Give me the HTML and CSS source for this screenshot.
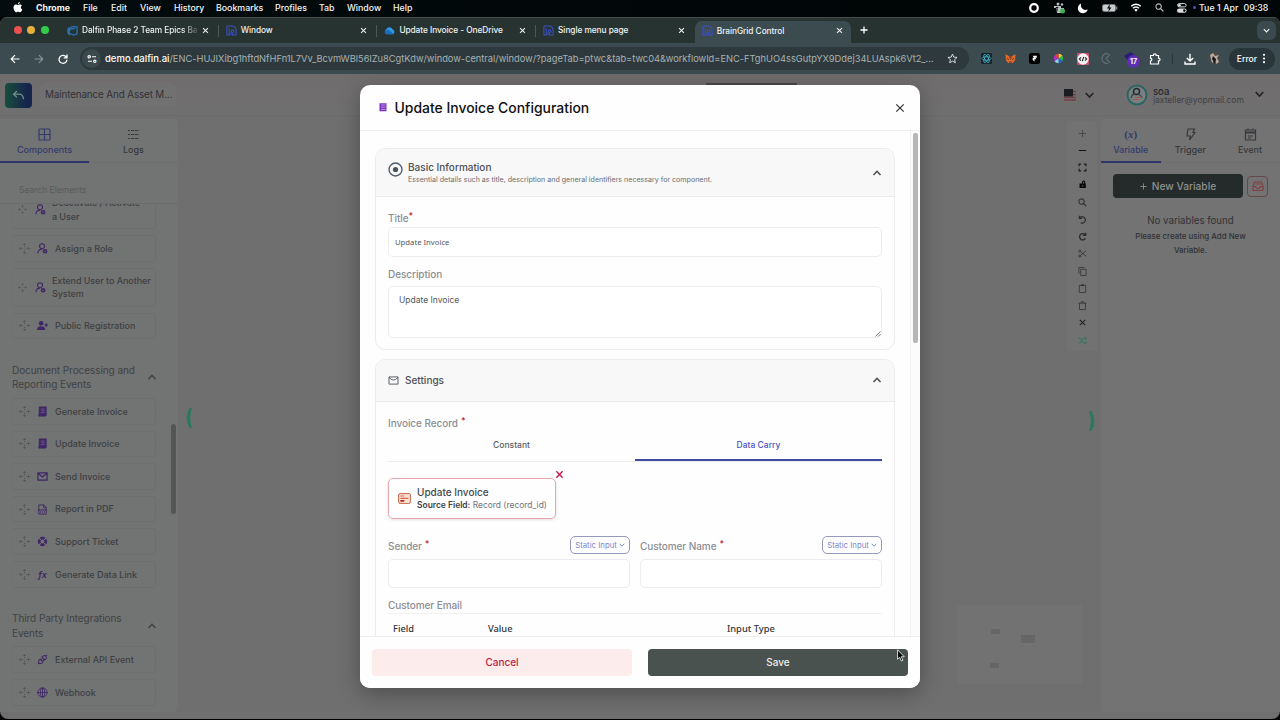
FILE: index.html
```html
<!DOCTYPE html>
<html lang="en">
<head>
<meta charset="utf-8">
<title>BrainGrid Control</title>
<link rel="stylesheet" href="styles.css">
</head>
<body>
<svg width="0" height="0" class="defs">
  <symbol id="move" viewBox="0 0 12 12"><g fill="currentColor"><path d="M6 0l1.600 2.300H4.400zM6 12l1.600-2.300H4.400zM0 6l2.300-1.600v3.200zM12 6L9.700 4.400v3.200z"/><circle cx="6" cy="3.700" r=".6"/><circle cx="6" cy="8.300" r=".6"/><circle cx="3.700" cy="6" r=".6"/><circle cx="8.300" cy="6" r=".6"/></g></symbol>
  <symbol id="user" viewBox="0 0 12 12"><g fill="none" stroke="currentColor" stroke-width="1.200"><circle cx="5.500" cy="3.500" r="2.700"/><path d="M1 11.300c0-3 2-4.600 4.500-4.600"/></g><circle cx="8.800" cy="9" r="2.500" fill="currentColor"/><path d="M7.700 9h2.200" stroke="#747474" stroke-width=".8"/></symbol>
  <symbol id="useradd" viewBox="0 0 12 12"><circle cx="4.500" cy="3.500" r="2.500" fill="currentColor"/><path d="M0 11c0-3 1.500-4.300 4.500-4.300S9 8 9 11z" fill="currentColor"/><path d="M10 3.500v4M8 5.500h4" stroke="currentColor" stroke-width="1.200"/></symbol>
  <symbol id="doc" viewBox="0 0 12 12"><path d="M2 .5h8.500V10L9.500 11.500H1.500V9H2z" fill="currentColor"/><path d="M4 3.300h4.500M4 5.300h4.500M4 7.300h4.500" stroke="#75678c" stroke-width=".8"/></symbol>
  <symbol id="mail" viewBox="0 0 12 12"><path d="M1 2h10v8H1zM1 2.500l5 4 5-4" fill="none" stroke="currentColor" stroke-width="1.300"/></symbol>
  <symbol id="pdf" viewBox="0 0 12 12"><path d="M2 5V1h5.500L10 3.500V11H2V5M7.200 1v3H10M1 6.500h10M4 8v1.500M6 8v1.500M8 8v1.500" fill="none" stroke="currentColor"/></symbol>
  <symbol id="ring" viewBox="0 0 12 12"><circle cx="6" cy="6" r="3.600" fill="none" stroke="currentColor" stroke-width="3"/><path d="M2 2l2.300 2.300M10 2L7.700 4.300M2 10l2.300-2.300M10 10L7.700 7.700" stroke="#747474" stroke-width="1.200"/></symbol>
  <symbol id="plug" viewBox="0 0 12 12"><g fill="none" stroke="currentColor" stroke-width="1.100"><path d="M5.500 3.500l1.500-1.500q1.500-1 2.600.300 1.300 1.200.300 2.700L8.500 6.500zM3.500 5.500L2 7q-1 1.500.300 2.600 1.200 1.300 2.700.300L6.500 8.500zM9.700 2.300L11 1M2.300 9.700L1 11M4.500 6.500l1-1M6.500 7.500l1-1"/></g></symbol>
  <symbol id="globe" viewBox="0 0 12 12"><g fill="none" stroke="currentColor" stroke-width=".9"><circle cx="6" cy="6" r="5"/><ellipse cx="6" cy="6" rx="2.300" ry="5"/><path d="M0 6h12M6 1v10"/></g></symbol>
  <symbol id="up" viewBox="0 0 10 10"><path d="M1.500 7L5 3.300 8.500 7" fill="none" stroke="currentColor" stroke-width="1.500"/></symbol>
  <symbol id="down" viewBox="0 0 10 10"><path d="M1.200 3L5 7l3.800-4" fill="none" stroke="currentColor" stroke-width="1.600"/></symbol>
  <symbol id="x" viewBox="0 0 10 10"><path d="M1.500 1.500l7 7M8.500 1.500l-7 7" fill="none" stroke="currentColor" stroke-width="1.500"/></symbol>
  <symbol id="dalfin" viewBox="0 0 12 12"><g fill="none" stroke="currentColor" stroke-width="1.100"><path d="M1 1h5q5 0 5 5v5M1 1v10h3M3.500 3.500v7.500M5 11l1.200-5.500h2L9 8.500M7 8v3h4"/></g></symbol>
  <symbol id="search" viewBox="0 0 10 10"><circle cx="4" cy="4" r="3" fill="none" stroke="currentColor" stroke-width="1.200"/><path d="M6.200 6.200L9.300 9.300" stroke="currentColor" stroke-width="1.400"/></symbol>
</svg>

<div class="menubar">
  <svg class="apple" viewBox="0 0 12 14"><path d="M8.300 0c.1 1.500-1 2.800-2.400 2.800C5.800 1.500 7 .2 8.300 0zM6 3.800c.6 0 1.300-.7 2.500-.6 1.100 0 2 .6 2.500 1.400-2.100 1.300-1.700 4.100.5 5C11 11 9.900 13 8.600 13c-1 0-1.300-.6-2.400-.6S4.700 13 3.800 13C1.700 13-.8 7.500.8 5c1.300-2.300 3.500-1.900 5.200-1.200z" fill="#fff"/></svg>
  <b>Chrome</b><span>File</span><span>Edit</span><span>View</span><span>History</span><span>Bookmarks</span><span>Profiles</span><span>Tab</span><span>Window</span><span>Help</span>
  <svg class="i10" viewBox="0 0 10 10"><rect x="1.200" y="1.200" width="7.600" height="7.600" rx="3.500" fill="#000" stroke="#fff" stroke-width="2.200"/></svg>
  <svg class="i12" viewBox="0 0 12 12"><path d="M1 4h7v2h3v3l-2 2H4L3 6H1z" fill="#b8bfc2"/><circle cx="5" cy="2" r="1.500" fill="#b8bfc2"/><circle cx="9" cy="2.500" r="1.200" fill="#b8bfc2"/><circle cx="9.500" cy="9" r="2.500" fill="#44ad50"/><path d="M4 5.500v4M2.800 5.500h2.500" stroke="#111"/></svg>
  <svg class="i10" viewBox="0 0 10 10"><path d="M3.200.5A5 5 0 1 0 9.700 6.500 4.800 4.800 0 0 1 3.200.5z" fill="#fff"/></svg>
  <svg class="batt" viewBox="0 0 16 8"><rect x=".5" y=".5" width="13" height="7" rx="1.800" fill="#c9cfd1" stroke="#747a7c"/><path d="M14.800 2.500v3" stroke="#aaa"/><path d="M7.800 0L5 4.500h2L6.200 8 9.500 3.500H7.500z" fill="#06090a"/></svg>
  <svg class="wifi" viewBox="0 0 12 10"><g fill="none" stroke="#fff" stroke-width="1.500"><path d="M.7 3.700q5.300-4.800 10.600 0M2.600 5.900q3.400-3 6.800 0"/></g><path d="M4 7.500q2-1.500 4 0L6 9.700z" fill="#fff"/></svg>
  <svg class="i9 dimwhite"><use href="#search"/></svg>
  <svg class="i10" viewBox="0 0 10 10"><rect x=".6" y=".6" width="8.500" height="3.300" rx="1.600" fill="none" stroke="#ddd"/><rect x="0" y="5.400" width="9.600" height="4.400" rx="2.200" fill="#ddd"/><circle cx="7.300" cy="7.600" r="1.300" fill="#111"/><circle cx="2.500" cy="2.200" r="1.300" fill="#ddd"/></svg>
  <i class="dot"></i>
  <span class="clock">Tue 1 Apr&nbsp; 09:38</span>
</div>

<div class="window">
  <div class="tabs">
    <div class="lights"><i class="r"></i><i class="y"></i><i class="g"></i></div>
    <div class="tab"><svg class="fav" viewBox="0 0 12 12"><path d="M1 4l6-2.500L11 2v7.500L7.500 11 3 9.500M1 4v5l1.500 1V5L9 3.500" fill="none" stroke="#2a6fae" stroke-width="1.500"/></svg><span class="fade">Dalfin Phase 2 Team Epics Ba</span><svg class="cl"><use href="#x"/></svg></div>
    <div class="tab"><svg class="fav blue"><use href="#dalfin"/></svg><span>Window</span><svg class="cl"><use href="#x"/></svg></div>
    <div class="tab"><svg class="fav" viewBox="0 0 12 12"><path d="M3 10a3 3 0 0 1-.5-5.500A3.800 3.800 0 0 1 9.500 5 2.600 2.600 0 0 1 9.500 10z" fill="#2d9be8"/><path d="M1 6.500Q4 3 10 9.500L3 10Q0 9 1 6.500z" fill="#176cc0"/></svg><span>Update Invoice - OneDrive</span><svg class="cl"><use href="#x"/></svg></div>
    <div class="tab noline"><svg class="fav blue"><use href="#dalfin"/></svg><span>Single menu page</span><svg class="cl"><use href="#x"/></svg></div>
    <div class="tab active"><svg class="fav blue"><use href="#dalfin"/></svg><span>BrainGrid Control</span><svg class="cl"><use href="#x"/></svg></div>
    <svg class="plus" viewBox="0 0 10 10"><path d="M5 1.500v7M1.500 5h7" stroke="#fff" stroke-width="1.300"/></svg>
    <div class="tabmenu"><svg class="i7"><use href="#down"/></svg></div>
  </div>
  <div class="toolbar">
    <svg class="i10" viewBox="0 0 10 10"><path d="M9.500 5H1.500M5 1.200L1.200 5 5 8.800" fill="none" stroke="#fff" stroke-width="1.200"/></svg>
    <svg class="i10" viewBox="0 0 10 10"><path d="M.5 5h8M5 1.200L8.800 5 5 8.800" fill="none" stroke="#87949a" stroke-width="1.200"/></svg>
    <svg class="i10" viewBox="0 0 10 10"><path d="M8.300 3A4 4 0 1 0 9 5.700M9 .5v3.300H5.700" fill="none" stroke="#fff" stroke-width="1.300"/></svg>
    <div class="url">
      <div class="site"><svg class="i10" viewBox="0 0 10 10"><g fill="none" stroke="#fff" stroke-width="1.100"><circle cx="2.200" cy="2.800" r="1.200"/><path d="M5 2.800h4M1 7.300h4"/><circle cx="7.800" cy="7.300" r="1.200"/></g></svg></div>
      <span class="addr"><b>demo.dalfin.ai</b>/ENC-HUJIXibg1hftdNfHFn1L7Vv_BcvmWBl56lZu8CgtKdw/window-central/window/?pageTab=ptwc&amp;tab=twc04&amp;workflowId=ENC-FTghUO4ssGutpYX9Ddej34LUAspk6Vt2_...</span>
      <svg class="i11" viewBox="0 0 12 12"><path d="M6 1.200l1.400 3.300 3.600.3-2.700 2.400.8 3.500L6 8.800l-3.100 1.900.8-3.500L1 4.800l3.600-.3z" fill="none" stroke="#dfe5e7"/></svg>
    </div>
    <div class="exts">
      <svg class="i11" viewBox="0 0 12 12"><rect width="12" height="12" rx="1.500" fill="#18252b"/><g fill="none" stroke="#43b6cf" stroke-width=".8"><ellipse cx="6" cy="6" rx="5" ry="2"/><ellipse cx="6" cy="6" rx="5" ry="2" transform="rotate(60 6 6)"/><ellipse cx="6" cy="6" rx="5" ry="2" transform="rotate(120 6 6)"/></g></svg>
      <svg class="i11" viewBox="0 0 12 12"><path d="M.5 1L4 3.200h4L11.500 1 11 8l-2.500 3H3.500L1 8z" fill="#dd6a2b"/><path d="M4 3.200L6 8l2-4.800zM4.500 9h3v2h-3z" fill="#8c4a2c"/><path d="M2.500 6l1.500 1M9.500 6L8 7" stroke="#321"/></svg>
      <svg class="i11" viewBox="0 0 12 12"><rect width="12" height="12" rx="2.500" fill="#000"/><path d="M4 3h4.500v2.300H6.700l1.300 1.400H6V9.500L4 7.300V5.200h1.500z" fill="#fff"/></svg>
      <svg class="i11" viewBox="0 0 12 12"><path d="M6 6V.8A5.200 5.200 0 0 1 10.500 3.400z" fill="#e8d02d"/><path d="M6 6L10.500 3.400a5.200 5.200 0 0 1 0 5.200z" fill="#34b34a"/><path d="M6 6l4.500 2.600A5.200 5.200 0 0 1 6 11.200z" fill="#2764d8"/><path d="M6 6v5.200a5.200 5.200 0 0 1-4.500-2.600z" fill="#8ed2e6"/><path d="M6 6L1.500 8.600a5.200 5.200 0 0 1 0-5.200z" fill="#b52bd0"/><path d="M6 6L1.500 3.400A5.200 5.200 0 0 1 6 .8z" fill="#e43c42"/></svg>
      <svg class="i12" viewBox="0 0 12 12"><rect width="12" height="12" rx="1" fill="#c9516d"/><circle cx="6" cy="6" r="5.700" fill="#f6f1f2"/><path d="M4 4.300L2.300 6 4 7.700M8 4.300L9.700 6 8 7.700M6.700 4L5.300 8" fill="none" stroke="#26262c" stroke-width="1.100"/></svg>
      <svg class="i11" viewBox="0 0 12 12"><path d="M10 1.500L5.500 6l4.500 4.500M8 1A5.300 5.300 0 1 0 8 11" fill="none" stroke="#67757a" stroke-width="1.100"/></svg>
      <svg class="e17" viewBox="0 0 16 16"><path d="M1 4.500L7 1l5 3.500-1 5-5 1.500z" fill="#2b1c78"/><circle cx="9.800" cy="9.800" r="6" fill="#5b31b2"/><text x="9.800" y="12.200" text-anchor="middle" font-size="6.500" font-weight="700" fill="#fff">17</text></svg>
      <svg class="i12" viewBox="0 0 12 12"><path d="M1.500 2.500h2.800c0-2.200 2.900-2.200 2.900 0h2.300v2.600c2 0 2 2.800 0 2.800v3.100h-8V8c1.800 0 1.800-2.800 0-2.800z" fill="none" stroke="#fff" stroke-width="1.200"/></svg>
      <i class="vsep"></i>
      <svg class="i12" viewBox="0 0 12 12"><path d="M6 .8v7M2.800 5L6 8l3.200-3M1 8.500V11h10V8.500" fill="none" stroke="#fff" stroke-width="1.400"/></svg>
      <svg class="i13" viewBox="0 0 13 13"><circle cx="6.500" cy="6.500" r="6.500" fill="#4a4a49"/><path d="M2 3l3-2 2 3 4-1-2 3 2 4-3 2-1-4-3 3z" fill="#b9aaa0"/><path d="M5 4l3 3-1 5-3-5z" fill="#151a1c"/></svg>
      <div class="err"><span>Error</span><svg class="dots" viewBox="0 0 4 12"><g fill="#fff"><circle cx="2" cy="2" r="1.200"/><circle cx="2" cy="6" r="1.200"/><circle cx="2" cy="10" r="1.200"/></g></svg></div>
    </div>
  </div>

  <div class="app">
    <div class="apphead">
      <div class="back"><svg class="i13" viewBox="0 0 13 13"><path d="M5 2L1.500 5.200 5 8.400M1.500 5.200h5.500q4 0 4.500 5" fill="none" stroke="#6f908f" stroke-width="1.200"/></svg></div>
      <div class="project">Maintenance And Asset M...</div>
      <svg class="flag" viewBox="0 0 12 12"><rect width="12" height="12" fill="#777072"/><path d="M0 8.500h12M0 11h12M8 2.500h4M8 5.500h4" stroke="#713e44" stroke-width="1.300"/><rect width="9" height="7.500" fill="#191c20"/></svg>
      <svg class="chev"><use href="#down"/></svg>
      <svg class="avatar" viewBox="0 0 22 22"><circle cx="11" cy="11" r="9.500" fill="#7a7f7f" stroke="#2c6663" stroke-width="2"/><circle cx="10.500" cy="7.500" r="3" fill="none" stroke="#222b33" stroke-width="1.500"/><path d="M5 14q1-4 4-4M12.500 10.500q3 1 3.500 3.500" fill="none" stroke="#39464c" stroke-width="1.300"/><path d="M9 13.500h7M7 15.500h6" stroke="#9b5a58"/></svg>
      <div class="who"><b>soa</b><span>jaxteller@yopmail.com</span></div>
      <svg class="chev last"><use href="#down"/></svg>
    </div>
    <div class="main">
      <div class="left">
        <div class="ptabs two">
          <div class="ptab on"><svg class="i13" viewBox="0 0 13 13"><rect x="1" y="1" width="11" height="11" rx="1" fill="none" stroke="currentColor" stroke-width="1.200"/><path d="M6.500 1v11M1 6.500h11" stroke="currentColor" stroke-width="1.200"/></svg><span>Components</span></div>
          <div class="ptab"><svg class="i13" viewBox="0 0 13 13"><path d="M1 2.500h2M4 2.500h8M1 6.500h2M4 6.500h8M1 10.500h2M4 10.500h8" stroke="currentColor" stroke-width="1.200" stroke-dasharray="3 .7"/></svg><span>Logs</span></div>
        </div>
        <div class="find">Search Elements</div>
        <div class="scroll">
          <div class="list">
            <div class="row tall first"><svg class="mv"><use href="#move"/></svg><svg class="ic"><use href="#user"/></svg><span>Deactivate / Activate<br>a User</span></div>
            <div class="row"><svg class="mv"><use href="#move"/></svg><svg class="ic"><use href="#user"/></svg><span>Assign a Role</span></div>
            <div class="row tall"><svg class="mv"><use href="#move"/></svg><svg class="ic"><use href="#user"/></svg><span>Extend User to Another<br>System</span></div>
            <div class="row"><svg class="mv"><use href="#move"/></svg><svg class="ic"><use href="#useradd"/></svg><span>Public Registration</span></div>
            <div class="group"><span>Document Processing and<br>Reporting Events</span><svg class="i10"><use href="#up"/></svg></div>
            <div class="row"><svg class="mv"><use href="#move"/></svg><svg class="ic"><use href="#doc"/></svg><span>Generate Invoice</span></div>
            <div class="row"><svg class="mv"><use href="#move"/></svg><svg class="ic"><use href="#doc"/></svg><span>Update Invoice</span></div>
            <div class="row"><svg class="mv"><use href="#move"/></svg><svg class="ic"><use href="#mail"/></svg><span>Send Invoice</span></div>
            <div class="row"><svg class="mv"><use href="#move"/></svg><svg class="ic"><use href="#pdf"/></svg><span>Report in PDF</span></div>
            <div class="row"><svg class="mv"><use href="#move"/></svg><svg class="ic"><use href="#ring"/></svg><span>Support Ticket</span></div>
            <div class="row"><svg class="mv"><use href="#move"/></svg><i class="fx">fx</i><span>Generate Data Link</span></div>
            <div class="group"><span>Third Party Integrations<br>Events</span><svg class="i10"><use href="#up"/></svg></div>
            <div class="row"><svg class="mv"><use href="#move"/></svg><svg class="ic"><use href="#plug"/></svg><span>External API Event</span></div>
            <div class="row"><svg class="mv"><use href="#move"/></svg><svg class="ic"><use href="#globe"/></svg><span>Webhook</span></div>
          </div>
          <div class="rail"><i></i></div>
        </div>
      </div>

      <div class="canvas">
        <svg class="grip gl" viewBox="0 0 8 20"><path d="M7 0L4.500 0Q-1.500 10 4.500 20H7Q3.500 10 7 0z" fill="#2c785d"/></svg>
        <svg class="grip gr" viewBox="0 0 8 20"><path d="M1 0L3.500 0Q9.500 10 3.500 20H1Q4.500 10 1 0z" fill="#2c785d"/></svg>
        <div class="tools">
          <svg viewBox="0 0 10 10"><path d="M5 1v8M1 5h8" stroke="#444"/></svg>
          <svg viewBox="0 0 10 10"><path d="M1 5h8" stroke="#111" stroke-width="1.200"/></svg>
          <svg viewBox="0 0 10 10"><path d="M1.200 3.500V1.200h2.300M6.500 1.200h2.300v2.300M8.800 6.500v2.300H6.500M3.500 8.800H1.200V6.500" fill="none" stroke="#1a1a1a" stroke-width="1.300"/></svg>
          <svg viewBox="0 0 10 10"><path d="M1.700 4h7v5h-7z" fill="#080808"/><path d="M5 4.500V2.500q1.500-2.500 2.500 0v2" fill="none" stroke="#080808" stroke-width="1.200"/><circle cx="5.200" cy="6.500" r=".8" fill="#747474"/></svg>
          <svg class="g3"><use href="#search"/></svg>
          <svg viewBox="0 0 10 10"><path d="M1.500.8v3h3M1.700 3.500A3.500 3.500 0 1 1 3 8.500" fill="none" stroke="#2d2d2d" stroke-width="1.300"/></svg>
          <svg viewBox="0 0 10 10"><path d="M8.500.8v3h-3M8.300 3.500A3.500 3.500 0 1 0 8.300 7" fill="none" stroke="#2d2d2d" stroke-width="1.500"/></svg>
          <svg viewBox="0 0 10 10"><g fill="none" stroke="#333"><circle cx="2" cy="2.200" r="1.100"/><circle cx="2" cy="7.800" r="1.100"/><path d="M3 3l6 5M3 7l6-5"/></g></svg>
          <svg viewBox="0 0 10 10"><path d="M3 2.500h6v7H3zM1 7.500v-7h6" fill="none" stroke="#3a3a3a"/></svg>
          <svg viewBox="0 0 10 10"><path d="M1.500 1.500h7v8h-7z" fill="none" stroke="#3a3a3a"/><path d="M3.500 1.300h3" stroke="#333" stroke-width="2"/></svg>
          <svg viewBox="0 0 10 10"><path d="M.5 2.500h9M3.500 2.500V.8h3v1.700M1.700 2.500v7h6.600v-7" fill="none" stroke="#3a3a3a"/></svg>
          <svg viewBox="0 0 10 10"><path d="M2 2l6 6M8 2L2 8" stroke="#252525" stroke-width="1.300"/></svg>
          <svg viewBox="0 0 10 10"><path d="M.5 2.500h2L6 7.500h3M.5 7.500h2L6 2.500h3M7.500 1L9.200 2.500 7.500 4M7.500 6l1.700 1.500L7.500 9" fill="none" stroke="#2a795c" stroke-width="1.100"/></svg>
        </div>
        <div class="mini"><i class="n1"></i><i class="n2"></i><i class="n3"></i></div>
      </div>

      <div class="right">
        <div class="ptabs three">
          <div class="ptab on"><span class="vx">(<em>x</em>)</span><span>Variable</span></div>
          <div class="ptab"><svg class="i13" viewBox="0 0 13 13"><path d="M4 1h6.500L9 4.500h2L5.500 12l.8-4H3z" fill="none" stroke="currentColor" stroke-width="1.200"/></svg><span>Trigger</span></div>
          <div class="ptab"><svg class="i13" viewBox="0 0 13 13"><path d="M1.500 2h10v10h-10zM4 .5v2M9 .5v2M4 8h5M4 10h3" fill="none" stroke="currentColor" stroke-width="1.200"/><path d="M1.500 4.500h10" stroke="currentColor" stroke-width="2"/></svg><span>Event</span></div>
        </div>
        <div class="newrow"><div class="newvar"><svg class="i7" viewBox="0 0 8 8"><path d="M4 .5v7M.5 4h7" stroke="#8b9190"/></svg><span>New Variable</span></div><div class="inbox"><svg class="i12" viewBox="0 0 12 12"><path d="M1 6L2.500 2h7L11 6v4.500H1zM1 6.500h2.500q.5 2 2.500 2t2.500-2H11M3.500 4h5" fill="none" stroke="#803f42" stroke-width="1.200"/></svg></div></div>
        <div class="none">No variables found</div>
        <div class="hint">Please create using Add New<br>Variable.</div>
      </div>
    </div>
    <i class="behind"></i>
  </div>
</div>

<div class="modal">
  <div class="mhead"><svg class="mdoc" viewBox="0 0 8 9"><path d="M.5.300h7v8H.5z" fill="#7a2fc0"/><path d="M2 2h4.500M2 4.200h4.500M2 6.400h4.500" stroke="#cfb0ea" stroke-width=".8"/></svg><h1>Update Invoice Configuration</h1><svg class="mx" viewBox="0 0 10 10"><path d="M1.300 1.300l7.400 7.400M8.700 1.300L1.300 8.700" stroke="#333" stroke-width="1.200"/></svg></div>
  <div class="mbody">
    <div class="mcontent">
      <div class="card c1">
        <div class="chead"><svg class="target" viewBox="0 0 15 15"><circle cx="7.500" cy="7.500" r="6.500" fill="none" stroke="#505c69" stroke-width="1.400"/><circle cx="7.500" cy="7.500" r="2.600" fill="#46515d"/></svg><div class="ct"><b>Basic Information</b><small>Essential details such as title, description and general identifiers necessary for component.</small></div><svg class="i10"><use href="#up"/></svg></div>
        <div class="cbody">
          <div class="lab t1"><span>Title</span><sup>*</sup></div>
          <div class="inp title">Update Invoice</div>
          <div class="lab t2"><span>Description</span></div>
          <div class="inp area"><span>Update Invoice</span><svg class="rs" viewBox="0 0 6 6"><path d="M.5 5.500l5-5M3.200 5.500l2.300-2.300" stroke="#555" stroke-width=".8"/></svg></div>
        </div>
      </div>
      <div class="card c2">
        <div class="chead sh"><svg class="env" viewBox="0 0 12 10"><path d="M1 1h10v8H1zM1 1.500Q6 7.500 11 1.500" fill="none" stroke="#59616a" stroke-width="1.100"/></svg><b>Settings</b><svg class="i10"><use href="#up"/></svg></div>
        <div class="cbody">
          <div class="lab t3"><span>Invoice Record</span><sup>*</sup></div>
          <div class="dtabs"><div>Constant</div><div class="on">Data Carry</div></div>
          <div class="chipwrap">
            <div class="chip"><svg class="form" viewBox="0 0 13 11"><rect x=".6" y=".6" width="11.800" height="9.800" rx="1.500" fill="#fbe3da" stroke="#cc6442"/><path d="M2.300 3h4M2.300 5.300h8.200" stroke="#d06a49" stroke-width="1.200"/><path d="M2.300 7.800h4" stroke="#a82e22" stroke-width="1.800"/></svg><div><b>Update Invoice</b><p><strong>Source Field:</strong> Record (record_id)</p></div></div>
            <svg class="rm"><use href="#x"/></svg>
          </div>
          <div class="cols">
            <div><div class="fl"><div class="lab"><span>Sender</span><sup>*</sup></div><div class="sel"><span>Static Input</span><svg class="i7"><use href="#down"/></svg></div></div><div class="inp"></div></div>
            <div><div class="fl"><div class="lab"><span>Customer Name</span><sup>*</sup></div><div class="sel"><span>Static Input</span><svg class="i7"><use href="#down"/></svg></div></div><div class="inp"></div></div>
          </div>
          <div class="lab t4"><span>Customer Email</span></div>
          <div class="th"><span>Field</span><span>Value</span><span>Input Type</span></div>
        </div>
      </div>
    </div>
    <div class="mrail"><i></i></div>
  </div>
  <div class="mfoot"><div class="btn cancel">Cancel</div><div class="btn save">Save</div></div>
</div>
<svg class="cursor" viewBox="0 0 8 13"><path d="M.6.800v9.400L2.700 8.300l1.600 3.700 1.600-.7-1.600-3.600h2.900z" fill="#000" stroke="#fff" stroke-width=".8"/></svg>
</body>
</html>
```

FILE: styles.css
```css
* { box-sizing: border-box; }
body { margin: 0; width: 1280px; height: 720px; overflow: hidden; background: #000; font-family: Inter, "Open Sans", sans-serif; font-size: 9px; position: relative; }
svg { display: block; flex: none; overflow: visible; }
.defs { position: absolute; }
.i7 { width: 7px; height: 7px; } .i9 { width: 9px; height: 9px; } .i10 { width: 10px; height: 10px; } .i11 { width: 11px; height: 11px; } .i12 { width: 12px; height: 12px; } .i13 { width: 13px; height: 13px; }
h1, p { margin: 0; }
span, b, small { white-space: nowrap; }

.menubar { height: 17px; background: linear-gradient(90deg, #030c0e, #000506 70%); color: #f3f5f5; display: grid; grid-template-columns: 23px 47px 28px 29px 34px 42px 59px 44px 28px 46px 636px 24px 25px 24px 28px 25px 22px 16px 10px 72px; padding: 0 0 2px 13px; align-items: center; font-size: 8.800px; font-weight: 500; }
.menubar b { font-weight: 700; }
.apple { width: 10px; height: 11px; }
.batt { width: 16px; height: 8px; }
.wifi { width: 12px; height: 9px; }
.dimwhite { color: #b7bcbe; }
.dot { width: 3px; height: 3px; border-radius: 50%; background: #5847c9; }
.clock { margin-left: -4px; word-spacing: .2px; }

.window { height: 702px; border-radius: 7px 7px 8px 8px; overflow: hidden; background: #6f6f6f; display: flex; flex-direction: column; }
.tabs { height: 26px; background: #273331; border-top: 1px solid #434d4c; display: flex; align-items: center; color: #f0f2f2; font-size: 8.300px; font-weight: 500; }
.lights { width: 60px; padding: 0 0 1px 14px; display: flex; gap: 5.400px; }
.lights i { width: 8px; height: 8px; border-radius: 50%; }
.r { background: #e9504e; } .y { background: #e6b03c; } .g { background: #32cc49; }
.tab { width: 158.700px; height: 22px; padding: 0 10px 1px 7px; display: flex; align-items: center; position: relative; }
.tab span { margin-left: 4px; letter-spacing: -.05px; }
.tab .fade { -webkit-mask-image: linear-gradient(90deg, #000 86%, transparent 102%); mask-image: linear-gradient(90deg, #000 86%, transparent 102%); }
.tab:not(.active):not(.noline) { background: linear-gradient(#4b5957, #4b5957) right center / 1px 12px no-repeat; }
.fav { width: 11px; height: 11px; }
.blue { color: #3d50c8; }
.cl { width: 7px; height: 7px; margin-left: auto; }
.tab.active { background: #3b4b50; border-radius: 7px 7px 0 0; height: 22px; align-self: flex-end; width: 156px; padding-right: 8px; padding-bottom: 3px; }
.plus { width: 10px; height: 10px; margin: 0 0 1px 8px; }
.tabmenu { margin-left: auto; margin-right: 4px; width: 19px; height: 19px; border-radius: 6px; background: #3a4a4e; display: flex; align-items: center; justify-content: center; }
.toolbar { height: 31px; background: #3b4b50; display: flex; align-items: center; padding-left: 10px; }
.toolbar > .i10 { margin-right: 14px; }
.url { margin-left: -2px; width: 889px; height: 23px; border-radius: 12px; background: #2d393c; display: flex; align-items: center; color: #a8b1b4; }
.site { width: 19px; height: 19px; border-radius: 50%; background: #3b484c; margin: 0 4px 0 2px; display: flex; align-items: center; justify-content: center; }
.addr { font-size: 9.300px; letter-spacing: -.005px; width: 842px; }
.addr b { color: #fff; font-weight: 500; font-size: 9.500px; }
.exts { display: grid; grid-template-columns: 24px 24px 24px 24px 23.500px 23px 25px 20px 15px 24px 21px 46px; align-items: center; margin-left: 12px; }
.e17 { width: 17px; height: 17px; margin-left: -1px; margin-top: 2px; }
.vsep { height: 10px; width: 1px; background: #25383e; margin-left: 3px; }
.err { height: 22px; border-radius: 11px; background: #28353a; color: #fff; font-weight: 500; display: flex; align-items: center; justify-content: center; gap: 5px; font-size: 8.600px; }
.dots { width: 4px; height: 11px; }

.app { flex: 1; min-height: 0; position: relative; display: flex; flex-direction: column; color: #313236; }
.apphead { height: 41px; display: flex; align-items: center; background: linear-gradient(#706c6e, #707070); padding: 1px 0 0 5px; }
.back { width: 27px; height: 25px; border-radius: 4px; background: linear-gradient(90deg, #174e3b, #16254b 80%); display: flex; align-items: center; justify-content: center; }
.project { width: 136px; height: 24px; line-height: 23px; margin-left: 8px; padding-left: 5px; border-radius: 5px; background: #727172; font-size: 9.900px; letter-spacing: -.14px; white-space: nowrap; }
.flag { width: 12px; height: 12px; margin-left: 888px; }
.chev { width: 11px; height: 10px; color: #242427; margin-left: 8px; }
.last { margin-left: 6px; margin-top: -3px; }
.avatar { width: 22px; height: 22px; margin-left: 31px; }
.who { margin-left: 5px; width: 95px; line-height: 9px; padding-top: 1px; }
.who b, .who span { display: block; } .who b { font-size: 9.500px; font-weight: 500; color: #26282c; } .who span { font-size: 8.500px; color: #3f4144; }
.behind { position: absolute; left: 706px; top: 9px; width: 91px; height: 2px; background: #4a474a; border-radius: 2px; }

.main { flex: 1; display: flex; padding: 4px 0 7px; min-height: 0; box-shadow: inset 0 1px #6c6c6c; }
.left { width: 178px; background: #727373; border-radius: 0 5px 5px 0; display: flex; flex-direction: column; }
.ptabs { height: 44px; display: grid; border-bottom: 1px solid #6c6d6d; }
.two { grid-template-columns: 89px 89px; } .three { grid-template-columns: 59.500px 59.500px 60px; }
.ptab { display: flex; flex-direction: column; align-items: center; padding-top: 9px; gap: 3px; line-height: 11px; font-size: 9px; font-weight: 500; color: #38393c; margin-bottom: -1px; }
.ptab.on { color: #353a6c; border-bottom: 2px solid #30346c; }
.vx { font: 700 11px/13px "Liberation Serif", serif; }
.find { height: 41px; line-height: 14px; padding: 20px 0 0 19px; font-size: 8.500px; color: #5a5c5c; border-bottom: 1px solid #6c6c6c; white-space: nowrap; }
.scroll { flex: 1; min-height: 0; overflow: hidden; display: flex; }
.list { width: 156px; padding-left: 12px; }
.row { height: 26.600px; margin-bottom: 6px; border: 1px solid #6e6e6e; border-left-color: #717171; border-radius: 3px; padding-left: 6px; display: flex; align-items: center; font-size: 9px; font-weight: 500; line-height: 13.300px; color: #3e4042; }
.row.tall { height: 39px; padding-left: 5px; }
.row.tall .mv { width: 9px; } .row.tall .ic { margin-left: 8px; } .row.tall span { margin-left: 6px; letter-spacing: -.07px; }
.list .first { margin-top: -14px; }
.mv { width: 11px; height: 11px; color: #505252; }
.ic { width: 11px; height: 11px; color: #3f2666; margin-left: 7px; }
.fx { width: 11px; margin-left: 7px; color: #3f2666; font-size: 9px; font-weight: 600; text-align: center; }
.row span { margin-left: 7px; }
.group { height: 41.400px; margin-top: 17.400px; display: flex; align-items: center; justify-content: space-between; line-height: 14.500px; font-size: 10px; color: #404244; }
.group span { letter-spacing: -.07px; }
.group .i10 { margin-right: -1px; }
.rail { padding: 220px 0 0 15px; }
.rail i { display: block; width: 5px; height: 90px; border-radius: 3px; background: #555; }

.canvas { flex: 1; position: relative; }
.grip { position: absolute; width: 8px; height: 20px; }
.gl { left: 7px; top: 289px; } .gr { right: 5px; top: 292px; }
.tools { position: absolute; right: 4px; top: 2px; width: 30px; height: 230px; background: #727272; border-radius: 4px; display: flex; flex-direction: column; align-items: center; gap: 8.250px; padding-top: 7.500px; }
.tools svg { width: 9px; height: 9px; } .g3 { color: #333; }
.mini { position: absolute; right: 19px; top: 486px; width: 125px; height: 79px; background: #727272; }
.mini i { position: absolute; background: #666; }
.n1 { left: 34px; top: 24px; width: 9px; height: 5px; } .n2 { left: 64px; top: 30px; width: 14px; height: 8px; } .n3 { left: 33px; top: 58px; width: 9px; height: 5px; }

.right { width: 179px; background: #737373; border-radius: 4px 0 0 4px; text-align: center; }
.newrow { display: flex; gap: 4px; align-items: center; padding: 11px 0 0 12px; }
.newvar { width: 130px; height: 24px; background: #242b2a; border-radius: 4px; color: #8d9291; display: flex; align-items: center; justify-content: center; gap: 5px; font-size: 10.200px; font-weight: 500; }
.inbox { width: 21px; height: 21px; border: 1px solid #65484a; border-radius: 4px; display: flex; align-items: center; justify-content: center; }
.none { margin-top: 16px; font-size: 9.700px; line-height: 14px; }
.hint { margin-top: 1px; font-size: 7.900px; line-height: 14px; font-weight: 500; }

.modal { position: absolute; left: 360px; top: 85px; width: 560px; height: 603px; border-radius: 10px; background: #fefefe; box-shadow: 0 6px 22px rgba(0,0,0,.3); overflow: hidden; display: flex; flex-direction: column; }
.mhead { height: 46px; border-bottom: 1px solid #efefef; display: flex; align-items: center; padding: 0 15px 0 19px; }
.mdoc { width: 8px; height: 9px; }
.mhead h1 { margin-left: 7.500px; font-size: 13.950px; font-weight: 500; color: #101012; white-space: nowrap; }
.mx { width: 10px; height: 10px; margin-left: auto; }
.mbody { flex: 1; min-height: 0; display: flex; overflow: hidden; }
.mcontent { width: 551px; padding: 17px 15px 0; border-right: 1px solid #f0f0f0; }
.card { width: 520px; border: 1px solid #ececee; border-radius: 10px; overflow: hidden; }
.c1 { height: 202px; } .c2 { height: 320px; margin-top: 9px; }
.chead { height: 48px; background: #f8f8f8; border-bottom: 1px solid #ebebed; display: flex; align-items: center; padding: 0 12px; color: #4c5055; }
.chead > .i10 { margin-left: auto; color: #4a4a4a; }
.target { width: 15px; height: 15px; margin-top: -6px; }
.ct { margin-left: 5px; margin-top: -1px; }
.ct b, .ct small { display: block; }
.chead b { font-weight: 500; font-size: 10px; line-height: 14px; }
.ct small { font-size: 7.080px; line-height: 11px; color: #6a6d70; }
.sh { height: 42px; padding-bottom: 1px; } .sh b { margin-left: 6px; }
.env { width: 11px; height: 9px; }
.cbody { padding: 0 12px; }
.lab { display: flex; font-size: 10px; font-weight: 500; color: #8b8e94; line-height: 14px; height: 14px; letter-spacing: -.07px; }
.lab sup { color: #c01c38; font-size: 9px; line-height: 9px; }
.t1 { margin-top: 14px; } .t2 { margin-top: 10px; } .t3 { margin-top: 13.500px; } .t4 { margin-top: 10px; }
.t3 sup, .fl sup { margin-left: 3px; }
.inp { border: 1px solid #ececee; border-radius: 5px; background: #fff; }
.title { height: 30px; margin-top: 2px; padding-left: 6px; font: 7.700px/28px "Noto Sans", sans-serif; color: #55585c; }
.area { height: 52px; margin-top: 5px; padding: 6px 10px; font-size: 8.500px; line-height: 14px; color: #55585c; position: relative; }
.rs { position: absolute; right: 0; bottom: 0; width: 6px; height: 6px; }
.dtabs { display: grid; grid-template-columns: 247px 247px; height: 33px; text-align: center; font-size: 8.500px; font-weight: 500; color: #5a5c60; border-bottom: 1px solid #ededed; line-height: 33px; margin-top: -.5px; }
.dtabs .on { color: #4a54c0; border-bottom: 2px solid #404c9f; height: 32px; }
.chipwrap { position: relative; margin-top: 16px; height: 41px; width: 167.500px; }
.chip { height: 41px; border: 1px solid #e7a7ac; border-radius: 5px; box-shadow: 0 1px 3px #dedede; display: flex; align-items: center; padding-left: 9px; gap: 6px; color: #45484d; }
.chip b { display: block; font-size: 10px; font-weight: 500; line-height: 13px; }
.chip p { font-size: 8.450px; line-height: 13px; color: #707378; white-space: nowrap; } .chip strong { font-weight: 600; color: #3c3e43; }
.form { width: 13px; height: 11px; }
.rm { position: absolute; right: -8px; top: -8px; width: 9px; height: 9px; color: #c01a4a; }
.cols { display: grid; grid-template-columns: 242px 242px; gap: 10px; margin-top: 16px; }
.fl { display: flex; align-items: center; justify-content: space-between; height: 19px; margin-bottom: 5px; }
.fl .lab { padding-top: 1px; }
.sel { width: 60px; height: 18px; border: 1px solid #9799bb; border-radius: 5px; display: flex; align-items: center; justify-content: center; gap: 2px; color: #8087cb; font-size: 7.800px; }
.sel .i7 { width: 6px; height: 6px; }
.cols .inp { height: 29px; }
.th { display: grid; grid-template-columns: 95px 239px 150px; padding-left: 5px; margin-top: 1px; border-top: 1px solid #f1f1f1; line-height: 29px; height: 29px; font-family: "Noto Sans", sans-serif; font-size: 9.300px; font-weight: 500; color: #303338; }
.mrail { width: 9px; padding: 2px 0 0 2px; background: #fbfbfb; }
.mrail i { display: block; width: 5px; height: 210px; border-radius: 2px; background: #b6b6b6; }
.mfoot { height: 52px; border-top: 1px solid #efefef; display: flex; gap: 16px; padding: 12px 12px 0; background: #fefefe; }
.btn { width: 260px; height: 27px; border-radius: 4px; text-align: center; line-height: 26px; font-size: 10px; font-weight: 500; }
.cancel { background: #fcecec; color: #bb1c48; } .save { background: #4a524f; color: #eceeee; }
.cursor { position: absolute; left: 897px; top: 649px; width: 8px; height: 13px; }
```
